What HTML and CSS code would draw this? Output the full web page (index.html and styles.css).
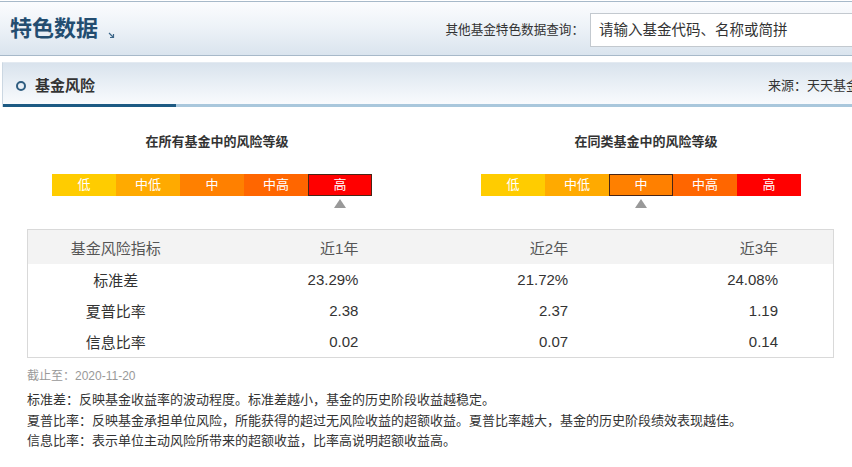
FILE: index.html
```html
<!DOCTYPE html>
<html lang="zh-CN">
<head>
<meta charset="utf-8">
<title>特色数据 - 基金风险</title>
<link rel="stylesheet" href="styles.css">
</head>
<body>
<div class="page">
  <div class="topbar">
    <h1 class="title">特色数据<svg class="arrow" width="7" height="7" viewBox="0 0 7 7"><path d="M1 1 L5.5 5.5 M2 5.5 H5.5 V2" stroke="#3c6688" stroke-width="1.2" fill="none"/></svg></h1>
    <div class="search">
      <span class="search-label">其他基金特色数据查询：</span>
      <div class="search-input">请输入基金代码、名称或简拼</div>
    </div>
  </div>

  <div class="section-head">
    <span class="ring"></span>
    <h2 class="section-title">基金风险</h2>
    <span class="source">来源：天天基金网</span>
  </div>

  <div class="content">
    <div class="charts">
      <div class="chart chart-all">
        <div class="chart-title">在所有基金中的风险等级</div>
        <div class="bar">
          <span class="seg s1">低</span>
          <span class="seg s2">中低</span>
          <span class="seg s3">中</span>
          <span class="seg s4">中高</span>
          <span class="seg s5 active">高</span>
        </div>
        <div class="marks">
          <span></span><span></span><span></span><span></span><span><i class="tri"></i></span>
        </div>
      </div>
      <div class="chart chart-same">
        <div class="chart-title">在同类基金中的风险等级</div>
        <div class="bar">
          <span class="seg s1">低</span>
          <span class="seg s2">中低</span>
          <span class="seg s3 active">中</span>
          <span class="seg s4">中高</span>
          <span class="seg s5">高</span>
        </div>
        <div class="marks">
          <span></span><span></span><span><i class="tri"></i></span><span></span><span></span>
        </div>
      </div>
    </div>

    <table class="risk-table">
      <thead>
        <tr><th class="name">基金风险指标</th><th>近1年</th><th>近2年</th><th>近3年</th></tr>
      </thead>
      <tbody>
        <tr><td class="name">标准差</td><td>23.29%</td><td>21.72%</td><td>24.08%</td></tr>
        <tr><td class="name">夏普比率</td><td>2.38</td><td>2.37</td><td>1.19</td></tr>
        <tr><td class="name">信息比率</td><td>0.02</td><td>0.07</td><td>0.14</td></tr>
      </tbody>
    </table>

    <div class="date">截止至：2020-11-20</div>
    <div class="notes">
      <p>标准差：反映基金收益率的波动程度。标准差越小，基金的历史阶段收益越稳定。</p>
      <p>夏普比率：反映基金承担单位风险，所能获得的超过无风险收益的超额收益。夏普比率越大，基金的历史阶段绩效表现越佳。</p>
      <p>信息比率：表示单位主动风险所带来的超额收益，比率高说明超额收益高。</p>
    </div>
  </div>
</div>
</body>
</html>
```

FILE: styles.css
```css
html, body {
  margin: 0;
  padding: 0;
  overflow: hidden;
  background: #fff;
}

body {
  font-family: "Liberation Sans", "Noto Sans CJK SC", sans-serif;
  color: #333;
}

.page {
  width: 880px;
  padding-top: 1px;
}

/* ---------- top bar ---------- */
.topbar {
  height: 53px;
  border-top: 1px solid #a7b9c9;
  border-bottom: 1px solid #a7b9c9;
  background: linear-gradient(to bottom, #fbfcfe 0%, #eef3f8 45%, #dae4ee 100%);
  display: flex;
  align-items: center;
}

.title {
  margin: 0 0 0 10px;
  font-size: 22px;
  line-height: 26px;
  font-weight: bold;
  color: #234d70;
  display: flex;
  align-items: flex-end;
  padding-top: 1px;
}

.arrow {
  margin-left: 10px;
  margin-bottom: 3px;
}

.search {
  margin-left: auto;
  display: flex;
  align-items: center;
  padding-top: 2px;
}

.search-label {
  font-size: 12.6px;
  color: #333;
  line-height: 18px;
  margin-right: 6px;
}

.search-input {
  width: 280px;
  height: 32px;
  border: 1px solid #c3c9cf;
  background: #fff;
  padding-left: 8px;
  font-size: 14.5px;
  line-height: 32px;
  color: #333;
  white-space: nowrap;
  overflow: hidden;
}

/* ---------- section header ---------- */
.section-head {
  margin: 6px 0 0 2px;
  height: 41px;
  padding-bottom: 3px;
  border-left: 1px solid #cbd7e2;
  border-top: 1px solid #e3eaf1;
  background:
    linear-gradient(to right, #1d5a83 0, #1d5a83 173px, #a9c7dc 173px) left bottom / 100% 3px no-repeat,
    linear-gradient(to bottom, #d9e3ed 0%, #eaf0f6 50%, #fbfcfe 100%);
  display: flex;
  align-items: center;
}

.ring {
  width: 6px;
  height: 6px;
  border: 2.5px solid #2f5d80;
  border-radius: 50%;
  margin-left: 13px;
  margin-top: 5px;
}

.section-title {
  margin: 0 0 0 9px;
  font-size: 15px;
  line-height: 20px;
  font-weight: bold;
  color: #333;
  padding-top: 5px;
}

.source {
  margin-left: auto;
  margin-right: 8px;
  font-size: 13px;
  line-height: 18px;
  color: #333;
  padding-top: 5px;
  white-space: nowrap;
}

/* ---------- charts ---------- */
.content {
  padding-left: 27px;
}

.charts {
  display: flex;
  padding-top: 26px;
}

.chart {
  width: 320px;
}

.chart-all {
  margin-left: 25px;
}

.chart-same {
  margin-left: 109px;
}

.chart-title {
  text-align: center;
  padding-left: 10px;
  font-size: 13px;
  line-height: 18px;
  font-weight: bold;
  color: #333;
}

.bar {
  margin-top: 23px;
  display: grid;
  grid-template-columns: repeat(5, 1fr);
  height: 22px;
}

.seg {
  color: #fff;
  font-size: 13px;
  line-height: 22px;
  text-align: center;
}

.s1 { background: #ffcc00; }
.s2 { background: #ffaa00; }
.s3 { background: #ff8000; }
.s4 { background: #ff6600; }
.s5 { background: #ff0000; }

.seg.active {
  box-shadow: inset 0 0 0 1px #4a2616;
}

.marks {
  display: grid;
  grid-template-columns: repeat(5, 1fr);
  height: 12px;
  margin-top: 3px;
}

.marks span {
  display: flex;
  justify-content: center;
}

.tri {
  width: 0;
  height: 0;
  border-left: 6px solid transparent;
  border-right: 6px solid transparent;
  border-bottom: 9px solid #999;
}

/* ---------- table ---------- */
.risk-table {
  margin-top: 18px;
  width: 807px;
  border-collapse: collapse;
  border: 1px solid #d9d9d9;
  font-size: 15px;
}

.risk-table th,
.risk-table td {
  font-weight: normal;
  text-align: right;
  padding: 0 55px 0 0;
  width: 155px;
}

.risk-table th {
  background: #f3f3f3;
  height: 34px;
  color: #555;
}

.risk-table td {
  height: 31px;
  color: #333;
}

.risk-table .name {
  text-align: center;
  width: 176px;
  padding: 0;
}

/* ---------- notes ---------- */
.date {
  margin-top: 10px;
  font-size: 12px;
  line-height: 16px;
  color: #999;
}

.notes {
  margin-top: 6px;
}

.notes p {
  margin: 0;
  font-size: 13px;
  line-height: 20.5px;
  color: #333;
  white-space: nowrap;
}
```
